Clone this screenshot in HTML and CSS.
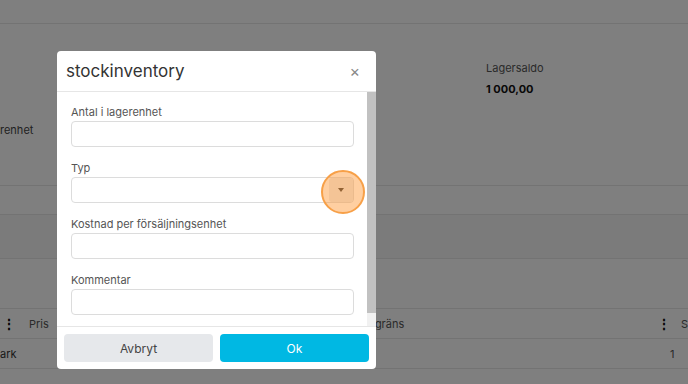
FILE: index.html
```html
<!DOCTYPE html>
<html lang="sv">
<head>
<meta charset="utf-8">
<title>stockinventory</title>
<link rel="stylesheet" href="styles.css">
</head>
<body>
<div class="page">
  <div class="topbar"></div>
  <div class="summary">
    <div class="sum-left"><span class="sum-cut">renhet</span></div>
    <div class="sum-right">
      <div class="sum-label">Lagersaldo</div>
      <div class="sum-value">1 000,00</div>
    </div>
  </div>
  <div class="row-a"></div>
  <div class="row-b"></div>
  <div class="row-c"></div>
  <div class="thead">
    <span class="kebab k1">⋮</span>
    <span class="th-pris">Pris</span>
    <span class="th-grans">gräns</span>
    <span class="kebab k2">⋮</span>
    <span class="th-s">S</span>
  </div>
  <div class="trow">
    <span class="td-ark">ark</span>
    <span class="td-one">1</span>
  </div>
</div>

<div class="overlay">
  <div class="modal">
    <div class="modal-header">
      <span class="modal-title">stockinventory</span>
      <span class="modal-close">×</span>
    </div>
    <div class="modal-body">
      <div class="body-content">
        <div class="field">
          <label class="field-label">Antal i lagerenhet</label>
          <div class="input"></div>
        </div>
        <div class="field">
          <label class="field-label">Typ</label>
          <div class="input select">
            <span class="select-btn"><span class="caret"></span></span>
            <span class="highlight"></span>
          </div>
        </div>
        <div class="field">
          <label class="field-label">Kostnad per försäljningsenhet</label>
          <div class="input"></div>
        </div>
        <div class="field">
          <label class="field-label">Kommentar</label>
          <div class="input"></div>
        </div>
      </div>
      <div class="scrollbar"><div class="thumb"></div></div>
    </div>
    <div class="modal-footer">
      <button class="btn btn-cancel">Avbryt</button>
      <button class="btn btn-ok">Ok</button>
    </div>
  </div>
</div>
</body>
</html>
```

FILE: styles.css
```css
* { box-sizing: border-box; }
html, body { margin: 0; padding: 0; }
body {
  width: 688px;
  height: 384px;
  overflow: hidden;
  background: #fff;
  font-family: Inter, "Noto Sans", sans-serif;
  color: #333;
  position: relative;
}
.page { width: 688px; }
.topbar { height: 24px; border-bottom: 1px solid #e6e6e6; }
.summary {
  height: 162px;
  border-bottom: 1px solid #e6e6e6;
  display: grid;
  grid-template-columns: 486px 1fr;
}
.sum-left { padding-top: 99px; font-size: 11px; color: #444; }
.sum-right { padding-top: 37px; }
.sum-label { font-size: 11px; color: #555; height: 21px; line-height: 14px; }
.sum-value { font-size: 11px; font-weight: 700; color: #111; line-height: 14px; }
.row-a { height: 29px; border-bottom: 1px solid #e6e6e6; }
.row-b { height: 44px; background: #f7f7f7; border-bottom: 1px solid #e6e6e6; }
.row-c { height: 50px; border-bottom: 1px solid #e6e6e6; }
.thead, .trow {
  height: 30px;
  border-bottom: 1px solid #e6e6e6;
  display: flex;
  align-items: center;
  font-size: 11px;
  color: #555;
}
.kebab { font-weight: 700; color: #111; font-size: 14px; }
.k1 { margin-left: 2px; width: 27px; }
.th-pris { width: 347px; }
.th-grans { width: 283px; }
.k2 { width: 24px; }
.td-ark { width: 670px; color: #333; }
.td-one { color: #555; }

.overlay {
  position: absolute;
  inset: 0;
  background: rgba(0, 0, 0, 0.5);
  padding: 51px 0 0 57px;
}
.modal {
  width: 319px;
  height: 318px;
  background: #fff;
  border-radius: 4px;
  display: flex;
  flex-direction: column;
}
.modal-header {
  height: 41px;
  border-bottom: 1px solid #e6e6e6;
  display: flex;
  align-items: center;
  justify-content: space-between;
  padding: 0 16px 0 9px;
}
.modal-title { font-size: 17px; color: #333; }
.modal-close { font-size: 16px; color: #888; }
.modal-body {
  height: 235px;
  display: flex;
  border-bottom: 1px solid #e6e6e6;
  overflow: hidden;
}
.body-content {
  flex: 1;
  padding: 13px 13px 0 14px;
}
.scrollbar {
  width: 9px;
  background: #f1f1f1;
  display: flex;
  flex-direction: column;
}
.thumb {
  height: 221px;
  background: #c1c1c1;
}
.field { margin-bottom: 14px; }
.field-label {
  display: block;
  font-size: 11px;
  line-height: 14px;
  color: #555;
  margin-bottom: 2px;
}
.input {
  height: 26px;
  border: 1px solid #dcdcdc;
  border-radius: 4px;
  background: #fff;
}
.select {
  position: relative;
  display: flex;
  justify-content: flex-end;
}
.select-btn {
  width: 24px;
  height: 24px;
  background: #ececec;
  border-radius: 3px;
  display: flex;
  align-items: center;
  justify-content: center;
}
.caret {
  width: 0;
  height: 0;
  border-left: 3px solid transparent;
  border-right: 3px solid transparent;
  border-top: 4px solid #444;
}
.highlight {
  position: absolute;
  left: 249px;
  top: -8px;
  width: 44px;
  height: 44px;
  border-radius: 50%;
  border: 2px solid #f7a048;
  background: rgba(255, 140, 30, 0.42);
}
.modal-footer {
  flex: 1;
  display: flex;
  gap: 7px;
  padding: 7px;
}
.btn {
  flex: 1;
  height: 28px;
  border: 0;
  border-radius: 4px;
  font-family: Inter, "Noto Sans", sans-serif;
  font-size: 12px;
}
.btn-cancel { background: #e6e8eb; color: #444; }
.btn-ok { background: #00b8e3; color: #fff; }
```
